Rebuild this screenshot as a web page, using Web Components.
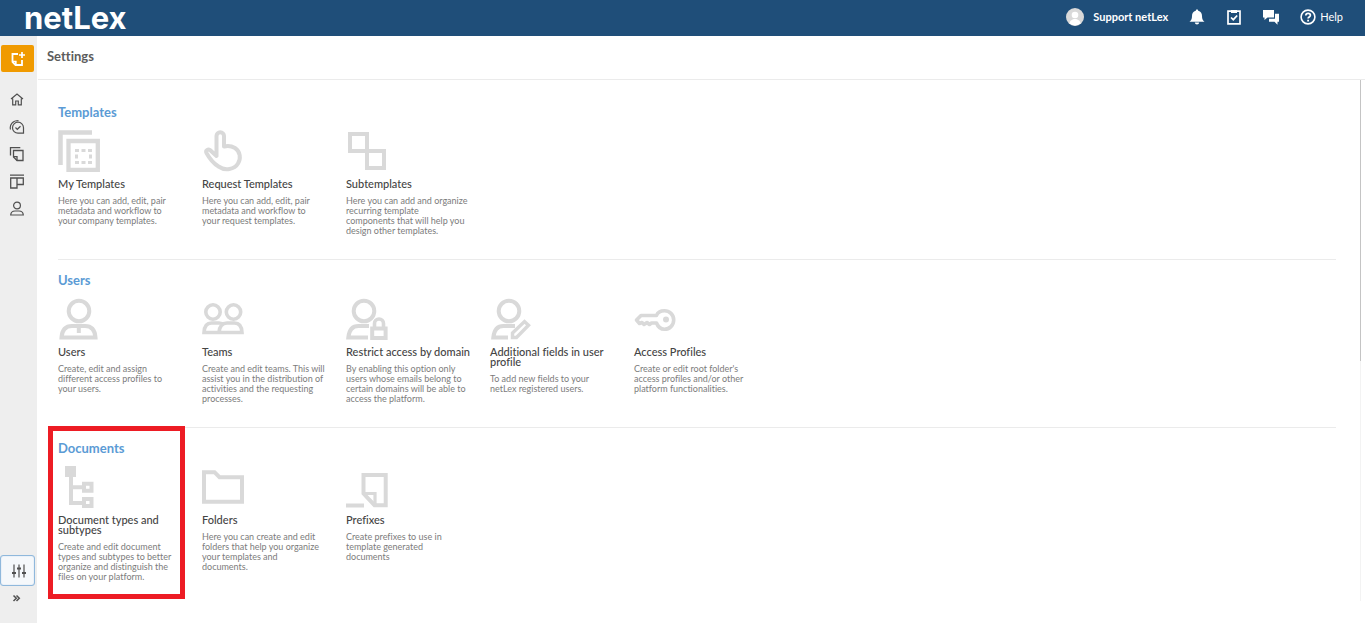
<!DOCTYPE html>
<html lang="en">
<head>
<meta charset="utf-8">
<title>Settings - netLex</title>
<style>
  html, body {
    margin: 0;
    height: 100%;
    background: #fff;
    font-family: Lato, "Liberation Sans", sans-serif;
    font-variant-ligatures: none;
  }
</style>
</head>
<body>
<app-shell>
  <top-bar slot="top"></top-bar>
  <side-bar slot="side"></side-bar>

  <settings-section heading="Templates">
    <settings-card icon="templates" heading="My Templates">Here you can add, edit, pair<br>metadata and workflow to<br>your company templates.</settings-card>
    <settings-card icon="hand" heading="Request Templates">Here you can add, edit, pair<br>metadata and workflow to<br>your request templates.</settings-card>
    <settings-card icon="subtemplates" heading="Subtemplates">Here you can add and organize<br>recurring template<br>components that will help you<br>design other templates.</settings-card>
  </settings-section>

  <settings-section heading="Users">
    <settings-card icon="user" heading="Users">Create, edit and assign<br>different access profiles to<br>your users.</settings-card>
    <settings-card icon="teams" heading="Teams">Create and edit teams. This will<br>assist you in the distribution of<br>activities and the requesting<br>processes.</settings-card>
    <settings-card icon="userlock" heading="Restrict access by domain">By enabling this option only<br>users whose emails belong to<br>certain domains will be able to<br>access the platform.</settings-card>
    <settings-card icon="useredit" heading="Additional fields in user profile">To add new fields to your<br>netLex registered users.</settings-card>
    <settings-card icon="key" heading="Access Profiles">Create or edit root folder's<br>access profiles and/or other<br>platform functionalities.</settings-card>
  </settings-section>

  <settings-section heading="Documents" marked>
    <settings-card icon="tree" heading="Document types and subtypes">Create and edit document<br>types and subtypes to better<br>organize and distinguish the<br>files on your platform.</settings-card>
    <settings-card icon="folder" heading="Folders">Here you can create and edit<br>folders that help you organize<br>your templates and<br>documents.</settings-card>
    <settings-card icon="prefix" heading="Prefixes">Create prefixes to use in<br>template generated<br>documents</settings-card>
  </settings-section>
</app-shell>

<script>
// icons: [viewBox, markup]
const ICONS = {
  // big ones, 42px
  templates: ['0 0 42 42', '<path d="M2.500 35V2.500H34" stroke-width="4.500"/><path d="M10.500 11h29.300v29H10.500z" stroke-width="4.300"/><path d="M17 20.500h17M17 32.500h17" stroke-width="3" stroke-dasharray="4 2.500"/><path d="M18.500 24.500v4M32.500 24.500v4" stroke-width="3"/>'],
  hand: ['0 0 42 42', '<path d="M14.500 26V6a3.500 3.500 0 0 1 7.500 0v10.500c3-.8 8-.3 11 1.500 5.500 3.500 6 10.500 3 15.500-3.500 6-13 7.500-19.500 3-4-2.500-9-8-12-13.500-1.300-2.600 1.500-4 3.500-3l6.500 6z" stroke-width="4" stroke-linejoin="round"/>'],
  subtemplates: ['0 0 42 42', '<path d="M4 4h17v17H4zM21 21h17v17H21z" stroke-width="4"/>'],
  user: ['0 0 42 42', '<circle cx="21" cy="13" r="10.300" stroke-width="4"/><path d="M3.500 39.500h34c-.5-7-4-11.500-10.500-11.500H14C7.500 28 4 32.500 3.500 39.500z" stroke-width="4"/><path d="M20.800 28v7" stroke-width="4"/>'],
  teams: ['0 0 42 42', '<circle cx="11" cy="14" r="7.200" stroke-width="3.600"/><circle cx="31.500" cy="14" r="7.200" stroke-width="3.600"/><path d="M20 34.500H2c.3-6 3-9.500 7.500-9.500h7.500c2 0 4 1 5 2M17 34.500h23c-.3-6-3-9.500-7.500-9.500H25c-5 0-7.500 3.500-8 9.500z" stroke-width="3.600"/>'],
  userlock: ['0 0 42 42', '<circle cx="18" cy="13" r="10.300" stroke-width="4"/><path d="M23 28H12.500c-6 0-9.500 4.500-10.200 11.500H22" stroke-width="4"/><path d="M26.200 30.500h13.400v9.500H26.200z" stroke-width="4"/><path d="M28.500 29v-3.500a4.500 4.500 0 0 1 9 0V29" stroke-width="3.600"/>'],
  useredit: ['0 0 42 42', '<circle cx="19" cy="13" r="10.300" stroke-width="4"/><path d="M25 28H13.500c-6 0-9.500 4.500-10.200 11.500H18" stroke-width="4"/><path d="M22.500 35 34.500 23.500l4 3.800-12 12.200h-4z" stroke-width="3.400"/>'],
  key: ['0 0 42 42', '<path d="M22.500 17.500H7L2.500 22l3 3.500 2.500-1 2 2 3-2 2.500 2 2-1.500h5c1.500 4 4.500 6.300 8 6.300 5 0 9.200-4 9.200-9.300s-4.200-9.300-9.200-9.300c-4 0-7 2-8 4.800z" stroke-width="3.600" stroke-linejoin="round"/><circle cx="32" cy="21.500" r="3" fill="currentColor" stroke="none"/>'],
  tree: ['0 0 42 42', '<path d="M7 0h11v11H7z" fill="currentColor" stroke="none"/><path d="M13 10v27H25M13 21.200H25" stroke-width="4"/><path d="M26 17.800h7.500v7H26zM26 33h7.500v7H26z" stroke-width="4"/>'],
  folder: ['0 0 42 42', '<path d="M2 6.200h10.500l5 5H40v24.500H2z" stroke-width="4"/>'],
  prefix: ['0 0 42 42', '<path d="M17.500 27.500V9h22.200v30.200H28.500z" stroke-width="4"/><path d="M17.500 27.500H29v11" stroke-width="3.200"/><path d="M0 39.500h18" stroke-width="4"/>'],
  // top bar
  avatar: ['0 0 18 18', '<circle cx="9" cy="9" r="9" fill="#d9d9d9" stroke="none"/><circle cx="9" cy="7" r="3.300" fill="#fff" stroke="none"/><path d="M3.500 15.500c.5-6 10.500-6 11 0a9 9 0 0 1-11 0z" fill="#fff" stroke="none"/>'],
  bell: ['0 0 16 16', '<path d="M8 .5c.8 0 1.200.5 1.200 1.200C12 2.300 13 4.500 13 7c0 3 .8 4.300 2.500 5.700H.5C2.200 11.300 3 10 3 7c0-2.500 1-4.700 3.800-5.300C6.800 1 7.200.5 8 .5zM5.800 13.500h4.400c-.2 2.600-4.200 2.600-4.400 0z" fill="currentColor" stroke="none"/>'],
  task: ['0 0 16 16', '<path d="M2 2.200h12v12.600H2z" stroke-width="1.700"/><path d="M5 1h6v3H5z" fill="currentColor" stroke="none"/><path d="m5 8.500 2.300 2.200L11.200 6.500" stroke-width="1.700"/>'],
  chat: ['0 0 16 16', '<path d="M0 1h11v7.500H4.500L1.500 11V8.500H0z" fill="currentColor" stroke="none"/><path d="M12 4.800h4v8h-1.500v3l-3-3H6V9.700h6z" fill="currentColor" stroke="none"/>'],
  help: ['0 0 16 16', '<circle cx="8" cy="8" r="6.900" stroke-width="1.600"/><path d="M5.800 6.500c0-3 4.600-2.800 4.600-.2 0 1.700-2.300 1.700-2.300 3.300" stroke-width="1.700"/><path d="M7.200 10.700h1.800v1.700H7.200z" fill="currentColor" stroke="none"/>'],
  // side bar
  newdoc: ['0 0 16 16', '<path d="M8 3H2.500v8l3 3H12V9" stroke-width="1.800"/><path d="M2.500 10.500h3.300V14M12 1v6M9 4h6" stroke-width="1.700"/>'],
  home: ['0 0 16 16', '<path d="M2 7 8 2l6 5M3.700 6.500v6.300h3V9h2.600v3.800h3V6.500" stroke-width="1.200"/>'],
  check: ['0 0 16 16', '<path d="M9 3.200a5.500 5.500 0 1 0 0 11h5.500V8.700A5.500 5.500 0 0 0 9 3.200zM6.500 8.500 8.300 10.300 11.500 7.300M1.500 10.500C.3 5.500 4 1.500 9.500 1.500" stroke-width="1.200"/>'],
  docs: ['0 0 16 16', '<path d="M1.500 9.500V1.700h9.800M4.500 4.500h9.500v10H8L4.500 11z" stroke-width="1.300"/><path d="M4.500 10.700H8v3.800" stroke-width="1.300"/>'],
  board: ['0 0 16 16', '<path d="M1 2.200h14M1.700 5h6.300v10H1.700zM8 5h6.300v6.500H8" stroke-width="1.300"/>'],
  person: ['0 0 16 16', '<circle cx="8" cy="5.500" r="3.400" stroke-width="1.200"/><path d="M1.700 15h12.600c-.2-2.800-1.800-4-4.300-4H6c-2.500 0-4.100 1.200-4.300 4z" stroke-width="1.200"/>'],
  sliders: ['0 0 16 16', '<path d="M3 1.500v13M8 1.500v13M13 1.500v13" stroke-width="1.200"/><path d="M1 9h4v2H1zM6 4.500h4v2H6zM11 9h4v2h-4z" fill="currentColor" stroke="none"/>'],
  more: ['0 0 16 16', '<path d="m4.500 5.500 2.800 2.800L4.500 11M7.500 5.500l2.800 2.800L7.500 11" stroke-width="1.500"/>'],
};

class NetIcon extends HTMLElement {
  constructor() {
    super();
    this.attachShadow({ mode: 'open' });
  }

  connectedCallback() {
    const [box, body] = ICONS[this.getAttribute('name')];
    this.shadowRoot.innerHTML = `
      <style>
        :host {
          display: block;
          flex: none;
          width: var(--size, 16px);
          height: var(--size, 16px);
        }
        svg {
          display: block;
          width: 100%;
          height: 100%;
        }
      </style>
      <svg viewBox="${box}" fill="none" stroke="currentColor" aria-hidden="true">${body}</svg>
    `;
  }
}

class AppShell extends HTMLElement {
  constructor() {
    super();
    this.attachShadow({ mode: 'open' });
    this.shadowRoot.innerHTML = `
      <style>
        :host {
          display: flex;
          flex-direction: column;
          height: 100vh;
          overflow: hidden;
        }
        .body {
          display: flex;
          flex: 1;
          min-height: 0;
        }
        main {
          flex: 1;
          display: flex;
          flex-direction: column;
          min-width: 0;
        }
        h1 {
          margin: 0 0 0 1px;
          padding: 0 9px 2px;
          font-size: 13px;
          font-weight: 700;
          line-height: 41px;
          color: #5c5c5c;
          border-bottom: 1px solid #ebebeb;
        }
        .scroll {
          flex: 1;
          display: flex;
          min-height: 0;
          margin-bottom: 22px;
        }
        .content {
          flex: 1;
          min-width: 0;
          padding: 12px 24px 0 21px;
          overflow: hidden;
        }
        .track {
          flex: none;
          width: 1px;
          margin-right: 4px;
          background: #f3f3f3;
        }
        .thumb {
          height: 54%;
          background: #c4c4c4;
        }
      </style>
      <slot name="top"></slot>
      <div class="body">
        <slot name="side"></slot>
        <main>
          <h1>Settings</h1>
          <div class="scroll">
            <div class="content"><slot></slot></div>
            <div class="track"><div class="thumb"></div></div>
          </div>
        </main>
      </div>
    `;
  }
}

class TopBar extends HTMLElement {
  constructor() {
    super();
    this.attachShadow({ mode: 'open' });
    this.shadowRoot.innerHTML = `
      <style>
        :host {
          display: block;
          background: #1f4e79;
          color: #fff;
        }
        header {
          display: flex;
          align-items: center;
          justify-content: space-between;
          height: 36px;
          padding: 0 22px 0 24px;
        }
        a, button {
          display: flex;
          align-items: center;
          padding: 0;
          border: 0;
          background: none;
          color: inherit;
          font: 11px/16px Lato, sans-serif;
          text-decoration: none;
        }
        .logo {
          font-family: Inter, Lato, sans-serif;
          font-size: 31px;
          line-height: 36px;
          font-weight: 700;
        }
        nav {
          display: flex;
          align-items: center;
          gap: 21px;
          padding-bottom: 2px;
        }
        .user {
          gap: 9px;
          font-weight: 700;
        }
        .user net-icon {
          --size: 18px;
        }
        .help {
          gap: 4px;
        }
      </style>
      <header>
        <a class="logo" href="#">netLex</a>
        <nav>
          <button class="user"><net-icon name="avatar"></net-icon>Support netLex</button>
          <button aria-label="Notifications"><net-icon name="bell"></net-icon></button>
          <button aria-label="Tasks"><net-icon name="task"></net-icon></button>
          <button aria-label="Messages"><net-icon name="chat"></net-icon></button>
          <a class="help" href="#"><net-icon name="help"></net-icon>Help</a>
        </nav>
      </header>
    `;
  }
}

class SideBar extends HTMLElement {
  constructor() {
    super();
    this.attachShadow({ mode: 'open' });
    this.shadowRoot.innerHTML = `
      <style>
        :host {
          display: flex;
          flex: none;
          flex-direction: column;
          width: 37px;
          background: #eee;
          color: #505050;
        }
        a, button {
          display: flex;
          align-items: center;
          justify-content: center;
          box-sizing: border-box;
          padding: 0;
          border: 0;
          background: none;
          color: inherit;
        }
        .new {
          width: 33px;
          height: 27px;
          margin: 9px 0 0 1px;
          border-radius: 2px;
          background: #f09a00;
          color: #fff;
        }
        nav {
          display: flex;
          flex: 1;
          flex-direction: column;
          gap: 11px;
          width: 34px;
          margin-top: 20px;
        }
        nav a {
          height: 16px;
        }
        .settings {
          width: 35px;
          height: 31px;
          padding-left: 2px;
          border: 1px solid #8fb8dc;
          border-radius: 3px;
          background: #f5f8fb;
          box-shadow: inset 0 0 1px #8fb8dc;
        }
        .more {
          width: 33px;
          height: 24px;
          margin-bottom: 13px;
        }
      </style>
      <button class="new" aria-label="New document"><net-icon name="newdoc"></net-icon></button>
      <nav>
        <a href="#" aria-label="Home"><net-icon name="home"></net-icon></a>
        <a href="#" aria-label="Tasks"><net-icon name="check"></net-icon></a>
        <a href="#" aria-label="Documents"><net-icon name="docs"></net-icon></a>
        <a href="#" aria-label="Boards"><net-icon name="board"></net-icon></a>
        <a href="#" aria-label="Contacts"><net-icon name="person"></net-icon></a>
      </nav>
      <button class="settings" aria-label="Settings"><net-icon name="sliders"></net-icon></button>
      <button class="more" aria-label="Expand menu"><net-icon name="more"></net-icon></button>
    `;
  }
}

class SettingsSection extends HTMLElement {
  constructor() {
    super();
    this.attachShadow({ mode: 'open' });
  }

  connectedCallback() {
    this.shadowRoot.innerHTML = `
      <style>
        :host {
          display: block;
          position: relative;
          box-sizing: border-box;
          min-height: 168px;
          padding-top: 10px;
          border-bottom: 1px solid #ebebeb;
        }
        :host([marked]) {
          border-bottom: 0;
        }
        h2 {
          margin: 0 0 8px;
          font-size: 13px;
          font-weight: 700;
          line-height: 20px;
          color: #5b9bd5;
        }
        .cards {
          display: flex;
          gap: 18px;
        }
        /* red frame over the first column */
        .mark {
          display: none;
        }
        :host([marked]) .mark {
          display: block;
          position: absolute;
          box-sizing: border-box;
          top: -2px;
          left: -10px;
          width: 137px;
          height: 173px;
          border: 5px solid #ed1c24;
          pointer-events: none;
        }
      </style>
      <h2>${this.getAttribute('heading')}</h2>
      <div class="cards"><slot></slot></div>
      <div class="mark"></div>
    `;
  }
}

class SettingsCard extends HTMLElement {
  constructor() {
    super();
    this.attachShadow({ mode: 'open' });
  }

  connectedCallback() {
    this.shadowRoot.innerHTML = `
      <style>
        :host {
          display: block;
          flex: none;
          width: 126px;
        }
        a {
          display: block;
          color: #444;
          text-decoration: none;
        }
        net-icon {
          --size: 42px;
          color: #d9d9d9;
        }
        h3 {
          margin: 7px 0;
          font-size: 11px;
          font-weight: 500;
          line-height: 10px;
        }
        p {
          margin: 0;
          font-size: 9px;
          line-height: 10px;
          color: #7c7c7c;
          white-space: nowrap;
        }
      </style>
      <a href="#">
        <net-icon name="${this.getAttribute('icon')}"></net-icon>
        <h3>${this.getAttribute('heading')}</h3>
        <p><slot></slot></p>
      </a>
    `;
  }
}

customElements.define('net-icon', NetIcon);
customElements.define('top-bar', TopBar);
customElements.define('side-bar', SideBar);
customElements.define('settings-card', SettingsCard);
customElements.define('settings-section', SettingsSection);
customElements.define('app-shell', AppShell);
</script>
</body>
</html>
